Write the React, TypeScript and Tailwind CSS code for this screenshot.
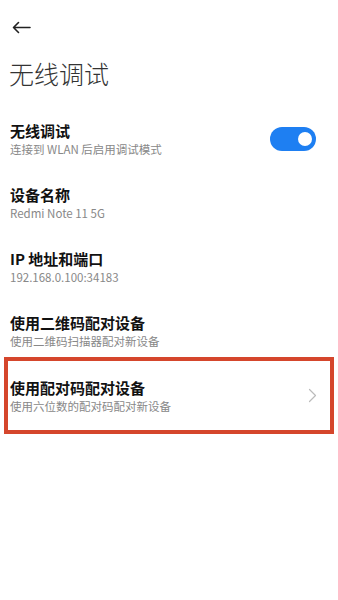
import React from "react";

const rows = [
  { title: "无线调试", sub: "连接到 WLAN 后启用调试模式", toggle: true },
  { title: "设备名称", sub: "Redmi Note 11 5G" },
  { title: "IP 地址和端口", sub: "192.168.0.100:34183" },
  { title: "使用二维码配对设备", sub: "使用二维码扫描器配对新设备" },
];

function Toggle() {
  return (
    <div className="flex h-6 w-[46px] items-center justify-end rounded-full bg-[#1e7ff2] pr-[4px]">
      <div className="h-[14px] w-[14px] rounded-full bg-white" />
    </div>
  );
}

export default function App() {
  return (
    <div
      className="min-h-[600px] w-full bg-white"
      style={{ fontFamily: '"Noto Sans CJK SC", "Noto Sans", sans-serif' }}
    >
      <div className="flex h-[54px] items-center pl-3">
        <svg width="19" height="13" viewBox="0 0 19 13" fill="none">
          <path d="M18 6.5H1.5M6.5 1.5L1.5 6.5L6.5 11.5" stroke="#222" strokeWidth="1.6" strokeLinecap="round" strokeLinejoin="round" />
        </svg>
      </div>
      <h1 className="mt-[3px] pl-[9px] text-[25px] font-light leading-8 text-[#333]">无线调试</h1>

      <div className="mt-[18px]">
        {rows.map((r) => (
          <div key={r.title} className="flex h-16 items-center pl-[10px] pr-[22px]">
            <div className="flex-1">
              <div className="text-[15px] font-semibold leading-5 text-[#111]">{r.title}</div>
              <div className="text-[11.5px] leading-4 text-[#888]">{r.sub}</div>
            </div>
            {r.toggle && <Toggle />}
          </div>
        ))}

        <div className="mx-1 -mt-1.5 flex h-[77px] items-center border-4 border-[#d5462c] pl-[2px] pr-[13px]">
          <div className="flex-1">
            <div className="text-[15px] font-semibold leading-5 text-[#111]">使用配对码配对设备</div>
            <div className="text-[11.5px] leading-4 text-[#888]">使用六位数的配对码配对新设备</div>
          </div>
          <svg width="9" height="15" viewBox="0 0 9 15" fill="none">
            <path d="M1.5 1.5L7.5 7.5L1.5 13.5" stroke="#bbb" strokeWidth="1.2" strokeLinecap="round" strokeLinejoin="round" />
          </svg>
        </div>
      </div>
    </div>
  );
}
